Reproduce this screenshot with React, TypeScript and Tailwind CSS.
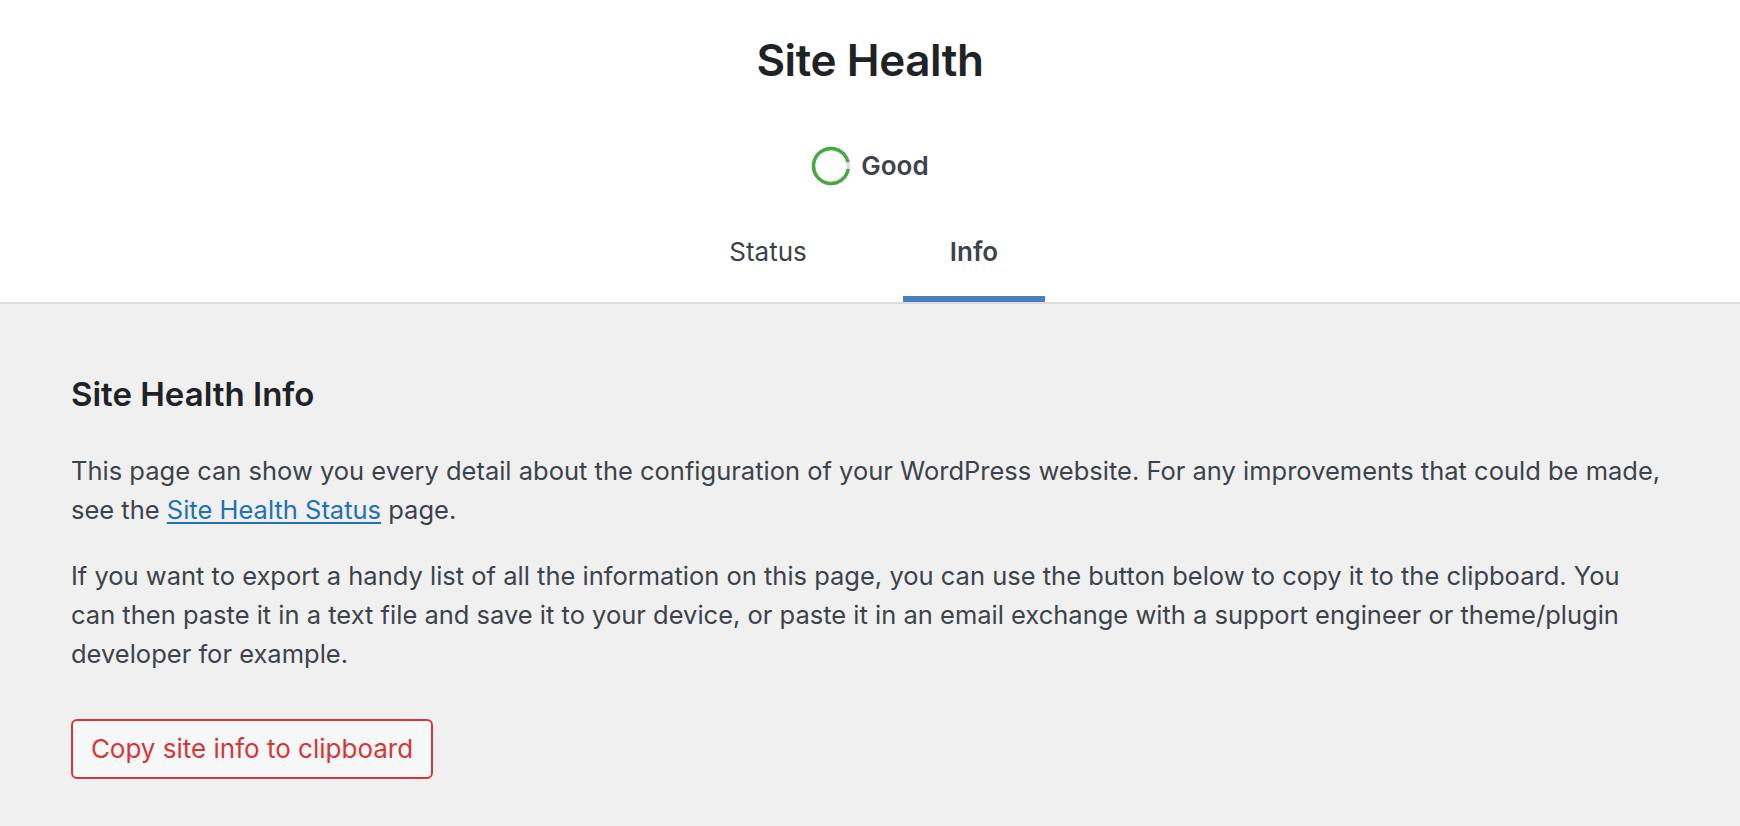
import React from "react";

function ProgressRing() {
  // ring with a small grey gap at about 3 o'clock
  const r = 17.5;
  const c = 2 * Math.PI * r;
  return (
    <svg width="40" height="40" viewBox="0 0 40 40" className="block">
      <circle cx="20" cy="20" r={r} fill="none" stroke="#dcdcde" strokeWidth="3.5" />
      <circle
        cx="20"
        cy="20"
        r={r}
        fill="none"
        stroke="#48a942"
        strokeWidth="3.5"
        strokeDasharray={`${c * 0.93} ${c}`}
        transform="rotate(10 20 20)"
      />
    </svg>
  );
}

export default function App() {
  return (
    <div className="min-h-screen bg-[#f0f0f1] font-['Inter','Noto_Sans',sans-serif] text-[#3c434a]">
      {/* Header */}
      <header className="flex flex-col items-center bg-white border-b-2 border-[#dcdcde]">
        <h1 className="mt-[30px] text-[44px] leading-[60px] font-semibold tracking-[-0.4px] text-[#1d2327]">
          Site Health
        </h1>

        <div className="mt-[56px] flex h-[40px] items-center">
          <ProgressRing />
          <span className="ml-[10px] text-[26px] leading-[40px] font-semibold text-[#3c434a]">
            Good
          </span>
        </div>

        <nav className="mt-[32px] flex pl-[2px]">
          <a className="mx-[32px] block w-[142px] pt-[16px] pb-[32px] text-center text-[26px] leading-[36px] text-[#3c434a]">
            Status
          </a>
          <a className="mx-[32px] block w-[142px] pt-[16px] pb-[32px] text-center text-[26px] leading-[36px] font-semibold text-[#3c434a] shadow-[inset_0_-6px_0_#4a7ebf]">
            Info
          </a>
        </nav>
      </header>

      {/* Body */}
      <main className="px-[71px] pt-[67px] pb-[40px]">
        <h2 className="text-[33px] leading-[46px] font-semibold text-[#1d2327]">
          Site Health Info
        </h2>

        <p className="mt-[34px] whitespace-nowrap text-[25.5px] leading-[39px]">
          This page can show you every detail about the configuration of your WordPress website. For any improvements that could be made,
          <br />
          see the{" "}
          <a href="#" className="text-[#2271b1] underline decoration-2 underline-offset-[3px]">
            Site Health Status
          </a>{" "}
          page.
        </p>

        <p className="mt-[27px] whitespace-nowrap text-[25.5px] leading-[39px]">
          If you want to export a handy list of all the information on this page, you can use the button below to copy it to the clipboard. You
          <br />
          can then paste it in a text file and save it to your device, or paste it in an email exchange with a support engineer or theme/plugin
          <br />
          developer for example.
        </p>

        <button
          type="button"
          className="mt-[46px] h-[60px] w-[362px] whitespace-nowrap rounded-[6px] border-2 border-[#d63638] bg-[#f6f7f7] text-[26px] leading-[56px] text-[#d63638]"
        >
          Copy site info to clipboard
        </button>
      </main>
    </div>
  );
}
